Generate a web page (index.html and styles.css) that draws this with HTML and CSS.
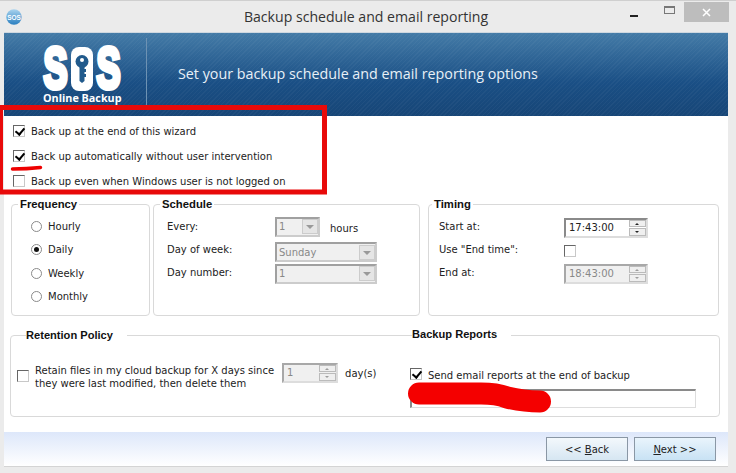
FILE: index.html
```html
<!DOCTYPE html>
<html lang="en">
<head>
<meta charset="utf-8">
<title>Backup schedule and email reporting</title>
<link rel="stylesheet" href="styles.css">
</head>
<body>
<div class="window">
  <div class="titlebar">
    <svg class="appicon" width="16" height="16" viewBox="0 0 16 16"><defs><linearGradient id="g" x1="0" y1="0" x2="0" y2="1"><stop offset="0" stop-color="#a9d3ee"/><stop offset="1" stop-color="#2a7fc0"/></linearGradient></defs><circle cx="8" cy="8" r="7.7" fill="url(#g)"/><text x="8" y="10.500" text-anchor="middle" class="icontext">SOS</text></svg>
    <div class="title">Backup schedule and email reporting</div>
    <div class="controls">
      <span class="ctl"><i class="min"></i></span>
      <span class="ctl"><i class="max"></i></span>
      <span class="close"><svg width="9" height="9" viewBox="0 0 9 9"><path d="M1 1l7 7M8 1l-7 7" stroke="#fff" stroke-width="1.5"/></svg></span>
    </div>
  </div>
  <div class="client">
    <header class="banner">
      <div class="logo">
        <div class="sos">
          <span class="big">S</span>
          <svg class="key" width="22" height="44" viewBox="0 0 22 44"><rect width="22" height="44" rx="8" fill="#fff"/><circle cx="11" cy="14.500" r="6.500" fill="#215a8c"/><circle cx="11" cy="13" r="2" fill="#fff"/><path d="M8.500 19h5v3h1.500v3h-1.500v2h1.500v3h-1.500v4l-2.500 2-2.500-2z" fill="#215a8c"/></svg>
          <span class="big">S</span>
        </div>
        <div class="tag">Online Backup</div>
      </div>
      <div class="slogan">Set your backup schedule and email reporting options</div>
    </header>
    <section class="options">
      <label class="row"><span class="cb on"></span>Back up at the end of this wizard</label>
      <label class="row"><span class="cb on"></span>Back up automatically without user intervention</label>
      <label class="row"><span class="cb"></span>Back up even when Windows user is not logged on</label>
    </section>
    <section class="groups">
      <fieldset class="group freq">
        <legend>Frequency</legend>
        <div class="radio"><span class="rb"></span>Hourly</div>
        <div class="radio"><span class="rb on"></span>Daily</div>
        <div class="radio"><span class="rb"></span>Weekly</div>
        <div class="radio"><span class="rb"></span>Monthly</div>
      </fieldset>
      <fieldset class="group sched">
        <legend>Schedule</legend>
        <div class="frow"><span class="lbl">Every:</span><span class="combo small"><span class="val">1</span><span class="drop"></span></span><span class="hours">hours</span></div>
        <div class="frow"><span class="lbl">Day of week:</span><span class="combo low"><span class="val">Sunday</span><span class="drop"></span></span></div>
        <div class="frow"><span class="lbl">Day number:</span><span class="combo"><span class="val">1</span><span class="drop"></span></span></div>
      </fieldset>
      <fieldset class="group timing">
        <legend>Timing</legend>
        <div class="frow"><span class="lbl">Start at:</span><span class="spin"><span class="val">17:43:00</span><span class="arrows"><b class="up"></b><b class="dn"></b></span></span></div>
        <div class="frow"><span class="lbl">Use "End time":</span><span class="cb"></span></div>
        <div class="frow"><span class="lbl">End at:</span><span class="spin off"><span class="val">18:43:00</span><span class="arrows"><b class="up"></b><b class="dn"></b></span></span></div>
      </fieldset>
    </section>
    <section class="lower">
      <div class="legend l1">Retention Policy</div>
      <div class="legend l2">Backup Reports</div>
      <div class="retain">
        <span class="cb"></span>
        <span class="retain-text">Retain files in my cloud backup for X days since<br>they were last modified, then delete them</span>
        <span class="spin off days"><span class="val">1</span><span class="arrows"><b class="up"></b><b class="dn"></b></span></span>
        <span class="dayslbl">day(s)</span>
      </div>
      <div class="report">
        <label class="row"><span class="cb on"></span>Send email reports at the end of backup</label>
        <div class="email"></div>
      </div>
    </section>
    <footer class="footer">
      <button class="btn">&lt;&lt; <u>B</u>ack</button>
      <button class="btn primary"><u>N</u>ext &gt;&gt;</button>
    </footer>
  </div>
</div>
<svg class="ink" width="736" height="473" viewBox="0 0 736 473">
  <rect x="0.500" y="107.500" width="324" height="84.500" fill="none" stroke="#e80a0a" stroke-width="5"/>
  <path d="M12.500 169q14 0 28-1.500" stroke="#e00" stroke-width="3.500" stroke-linecap="round" fill="none"/>
  <path d="M419 393.500h62q16 0 26 4 16 4 33 4" stroke="#f40000" stroke-width="22" stroke-linecap="round" stroke-linejoin="round" fill="none"/>
</svg>
</body>
</html>
```
FILE: styles.css
```css
* { box-sizing: border-box; }
html, body { margin: 0; padding: 0; }
body {
  width: 736px; height: 473px; overflow: hidden; position: relative;
  background: #ebebeb;
  font-family: "DejaVu Sans", sans-serif; font-size: 10px; color: #222;
}
.window { border-top: 1px solid #cfcfcf; height: 473px; display: flex; flex-direction: column; }
.titlebar { height: 31px; display: flex; align-items: center; position: relative; padding-left: 6px; flex: none; }
.appicon { flex: none; }
.icontext { font-family: "Liberation Sans", sans-serif; font-weight: 700; font-size: 6.500px; fill: #fff; }
.title {
  position: absolute; left: 0; right: 0; top: 6px; text-align: center; padding-right: 4px;
  font-family: "Open Sans", sans-serif; font-size: 14.100px; line-height: 20px; color: #333;
}
.controls { position: absolute; right: 7px; top: 1px; display: flex; align-items: flex-start; }
.ctl { width: 34px; height: 20px; display: flex; align-items: center; justify-content: center; }
.min { display: block; width: 8px; height: 2px; background: #222; margin-top: 8px; margin-left: 4px; }
.max { display: block; width: 11px; height: 8px; border: 1px solid #777; border-top-width: 2px; margin-left: 6px; margin-top: -4px; }
.close { width: 45px; height: 20px; background: #bdbdbd; display: flex; align-items: center; justify-content: center; margin-left: 1px; }
.client { margin: 0 8px 0 4px; height: 435px; background: #fff; display: flex; flex-direction: column; flex: none; border-bottom: 1px solid #d4d4d4; }
.banner {
  height: 84px; flex: none; display: flex; align-items: center;
  background: repeating-linear-gradient(135deg, rgba(255,255,255,.035) 0 1px, transparent 1px 3px), linear-gradient(#447ba7, #1a4f85 60%, #174677);
  border-top: 1px solid #cfd8e0;
}
.logo { width: 143px; height: 67px; flex: none; align-self: flex-start; border-right: 1px solid #6d92b3; margin-top: 5px; padding: 9px 0 0 39px; }
.sos { display: flex; gap: 4px; height: 44px; align-items: center; }
.big {
  width: 25px; height: 26px; flex: none; display: block; color: #fff; text-align: center;
  font-family: "Liberation Sans", sans-serif; font-weight: 700; font-size: 36px; line-height: 26px;
  -webkit-text-stroke: 3.200px #fff; transform: scaleY(1.6);
}
.key { flex: none; margin: 0 -1px 0 -1px; width: 22px; }
.tag { font-family: "Open Sans", sans-serif; font-weight: 700; color: #fff; font-size: 10.800px; line-height: 14px; white-space: nowrap; }
.slogan { margin-left: 31px; margin-top: -2px; color: #e8f0f7; font-family: "Open Sans", sans-serif; font-size: 14.300px; white-space: nowrap; }
.options { padding: 3px 0 0 9px; height: 88px; flex: none; }
.row { display: flex; align-items: center; height: 25px; white-space: nowrap; }
.row .cb { margin-right: 6px; margin-top: -2px; }
.cb { display: inline-block; width: 12px; height: 12px; border: 1px solid #c8c8c8; border-top-color: #666; border-left-color: #666; background: #fff; flex: none; position: relative; }
.cb.on::after { content: ""; position: absolute; left: 3px; top: 0; width: 4px; height: 7px; border: solid #000; border-width: 0 2px 2px 0; transform: rotate(40deg); }
.groups { display: flex; height: 112px; padding-left: 7px; flex: none; align-items: flex-start; }
.group { margin: 0; padding: 0; border: 1px solid #d9d9d9; border-radius: 4px; height: 112px; position: relative; }
.group legend { position: absolute; top: -7px; background: #fff; font-weight: 700; font-family: "Liberation Sans", sans-serif; font-size: 11.300px; color: #111; padding: 0 2px; line-height: 13px; }
.freq { width: 139px; padding: 10px 0 0 19px; margin-right: 3px; }
.freq legend { left: 6px; }
.sched { width: 267px; padding: 11px 0 0 13px; margin-right: 8px; }
.sched legend { left: 6px; }
.timing { width: 291px; padding: 11px 0 0 10px; }
.timing legend { left: 3px; }
.radio { display: flex; align-items: center; height: 23.300px; }
.rb { width: 11px; height: 11px; border-radius: 50%; border: 1px solid #8a8a8a; margin-right: 6px; position: relative; background: #fff; }
.rb.on::after { content: ""; position: absolute; left: 2px; top: 2px; width: 5px; height: 5px; border-radius: 50%; background: #111; }
.frow { display: flex; align-items: center; height: 23px; }
.lbl { width: 108px; flex: none; margin-bottom: 3px; }
.timing .lbl { width: 125px; }
.combo { width: 102px; height: 20px; background: #f0f0f0; border: 2px solid #a0a0a0; border-right-color: #ccc; border-bottom-color: #ccc; display: flex; align-items: center; justify-content: space-between; color: #888; padding-left: 2px; }
.combo.low { margin-top: 3px; }
.combo.small { width: 45px; margin-top: -2px; }
.drop { width: 16px; height: 15px; background: #e5e5e5; border: 1px solid #ccc; position: relative; }
.drop::after { content: ""; position: absolute; left: 3px; top: 5px; border: 4px solid transparent; border-top: 4px solid #999; border-bottom: 0; }
.hours { margin-left: 10px; margin-top: 2px; }
.spin { width: 84px; height: 20px; border: 2px solid #8a8a8a; border-right-color: #ddd; border-bottom-color: #ddd; display: flex; align-items: center; justify-content: space-between; padding-left: 3px; background: #fff; color: #222; }
.spin.off { background: #f0f0f0; color: #888; border-color: #a8a8a8 #ddd #ddd #a8a8a8; }
.arrows { width: 17px; height: 16px; display: flex; flex-direction: column; gap: 1px; }
.arrows b { flex: 1; background: #efefef; border: 1px solid #bbb; display: block; position: relative; }
.arrows b::after { content: ""; position: absolute; left: 5px; top: 2px; border: 2px solid transparent; }
.arrows .up::after { border-bottom-color: #222; border-top: 0; }
.arrows .dn::after { border-top-color: #222; border-bottom: 0; }
.spin.off .arrows b::after { opacity: .4; }
.lower { margin: 19px 0 0 6px; width: 710px; height: 82px; border: 1px solid #d9d9d9; border-radius: 4px; position: relative; display: flex; flex: none; }
.legend { position: absolute; top: -7px; background: #fff; font-weight: 700; font-family: "Liberation Sans", sans-serif; font-size: 11.100px; color: #111; line-height: 13px; padding: 0 14px 0 0; }
.l1 { left: 15px; }
.l2 { left: 401px; top: -8px; }
.retain { width: 399px; flex: none; display: flex; align-items: center; padding: 0 0 0 6px; height: 78px; }
.retain .cb { margin-right: 6px; margin-top: 2px; }
.retain-text { line-height: 13px; white-space: nowrap; margin-top: 4px; }
.days { width: 56px; margin-left: 8px; margin-bottom: 5px; }
.dayslbl { margin-left: 7px; margin-bottom: 4px; }
.report { padding-top: 29px; }
.report .row { height: 20px; }
.email { width: 286px; height: 19px; border: 2px solid #8a8a8a; border-right-color: #ddd; border-bottom-color: #ddd; border-right-width: 1px; border-bottom-width: 1px; margin-top: 4px; background: #fff; }
.footer { margin-top: auto; height: 34px; display: flex; justify-content: flex-end; gap: 6px; padding: 5px 12px 0 0; background: linear-gradient(#dde7fa, #fff); flex: none; }
.btn { width: 82px; height: 24px; padding: 0; font: inherit; color: #222; border: 1px solid #8a97a5; background: linear-gradient(#f3f8fc, #d6e6f2); }
.btn.primary { background: linear-gradient(#e9f4fc, #c8e2f4); }
.ink { position: absolute; left: 0; top: 0; pointer-events: none; }
```
